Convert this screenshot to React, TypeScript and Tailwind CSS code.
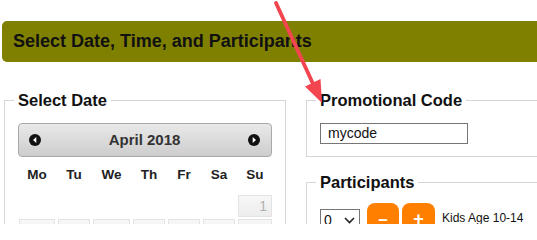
import React from 'react';

const weekdays = ['Mo', 'Tu', 'We', 'Th', 'Fr', 'Sa', 'Su'];

function NavIcon({ dir }: { dir: 'prev' | 'next' }) {
    return (
        <svg width="12" height="12" viewBox="0 0 12 12">
            <circle cx="6" cy="6" r="6" fill="#111" />
            {dir === 'prev' ? (
                <polygon points="7.3,3 4,6 7.3,9" fill="#fff" />
            ) : (
                <polygon points="4.7,3 8,6 4.7,9" fill="#fff" />
            )}
        </svg>
    );
}

export default function App() {
    return (
        <div
            className="relative w-[537px] h-[224px] overflow-hidden bg-white pt-[21px] text-[#111]"
            style={{ fontFamily: '"Liberation Sans", Arial, sans-serif' }}
        >
            {/* section title bar */}
            <div className="ml-[2px] w-[620px] h-[41px] rounded-[5px] bg-[#808000] flex items-center pl-[11px] text-[18px] font-bold text-[#111]">
                Select Date, Time, and Participants
            </div>

            <div className="flex items-start gap-[20px] pl-[4px] mt-[29px]">
                {/* date picker */}
                <fieldset className="w-[282px] border border-[#d6d6d6] pl-[13px] pr-[13px] pt-[14px] pb-[20px]">
                    <legend className="-ml-[4px] px-[4px] text-[16.5px] leading-[18px] font-bold">Select Date</legend>
                    <div className="h-[34px] rounded-[4px] border border-[#a9a9a9] bg-gradient-to-b from-[#e9e9e9] to-[#cdcdcd] flex items-center justify-between pl-[10px] pr-[11px]">
                        <NavIcon dir="prev" />
                        <span className="text-[15px] font-bold text-[#333]">April 2018</span>
                        <NavIcon dir="next" />
                    </div>
                    <div className="ml-px grid grid-cols-[36px_32px_37px_32px_32px_32px_34px] gap-x-[3px] gap-y-[2px]">
                        {weekdays.map((d) => (
                            <div key={d} className="h-[36px] flex items-center justify-center text-[13.5px] font-bold text-[#222]">
                                {d}
                            </div>
                        ))}
                        <div className="col-start-7 h-[22px] border border-[#e3e3e3] bg-gradient-to-b from-[#f7f7f7] to-[#ededed] text-right pr-[4px] text-[14px] leading-[20px] text-[#b0b0b0]">
                            1
                        </div>
                        {[2, 3, 4, 5, 6, 7, 8].map((n) => (
                            <div key={n} className="h-[22px] border border-[#e3e3e3] bg-gradient-to-b from-[#f7f7f7] to-[#ededed]" />
                        ))}
                    </div>
                </fieldset>

                <div className="flex flex-col">
                    {/* promo code */}
                    <fieldset className="w-[260px] border border-[#d6d6d6] pl-[13px] pt-[14px] pb-[12px]">
                        <legend className="-ml-[4px] px-[4px] text-[16.5px] leading-[18px] font-bold">Promotional Code</legend>
                        <div className="w-[148px] h-[21px] border border-[#767676] flex items-center pl-[7px] text-[14px] text-[#111]">
                            mycode
                        </div>
                    </fieldset>

                    {/* participants */}
                    <fieldset className="mt-[16px] w-[260px] border border-[#d6d6d6] pl-[13px] pt-[12px] pb-[12px]">
                        <legend className="-ml-[4px] px-[4px] text-[16.5px] leading-[18px] font-bold">Participants</legend>
                        <div className="flex items-start">
                            <div className="mt-[6px] w-[40px] h-[22px] border border-[#767676] flex items-center justify-between pl-[3px] pr-[4px] text-[14px]">
                                <span>0</span>
                                <svg width="11" height="7" viewBox="0 0 11 7">
                                    <polyline points="1,1 5.5,5.5 10,1" fill="none" stroke="#222" strokeWidth="1.6" />
                                </svg>
                            </div>
                            <button className="ml-[7px] w-[32px] h-[32px] rounded-t-[8px] rounded-b-[4px] bg-[#ff8000] text-white text-[17px] font-bold leading-none flex items-center justify-center">
                                –
                            </button>
                            <button className="ml-[3px] w-[33px] h-[32px] rounded-t-[8px] rounded-b-[4px] bg-[#ff8000] text-white text-[18px] font-bold leading-none flex items-center justify-center">
                                +
                            </button>
                            <span className="ml-[7px] mt-[8px] text-[12px] leading-[14px] text-[#111]">Kids Age 10-14</span>
                        </div>
                    </fieldset>
                </div>
            </div>

            {/* annotation arrow */}
            <svg className="absolute left-0 top-0 pointer-events-none" width="537" height="224" viewBox="0 0 537 224">
                <line x1="276" y1="3" x2="314" y2="86" stroke="#f2454f" strokeWidth="3.8" strokeLinecap="round" />
                <polygon points="322,103 305,86.5 320.5,79" fill="#f2454f" />
            </svg>
        </div>
    );
}
